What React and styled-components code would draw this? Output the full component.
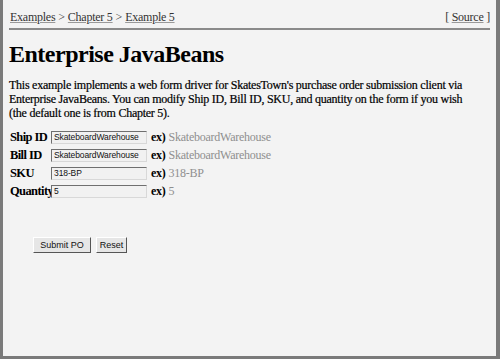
import React from "react";
import styled, { createGlobalStyle } from "styled-components";

const Global = createGlobalStyle`
  html, body { margin: 0; padding: 0; background: #f3f3f3; }
`;

const serif = `"Liberation Serif", "Times New Roman", Times, serif`;
const sans = `"Liberation Sans", Arial, sans-serif`;

const Frame = styled.div`
  box-sizing: border-box;
  width: 500px;
  height: 359px;
  background: #f3f3f3;
  border-left: 3px solid #7a7a7a;
  border-right: 4px solid #7a7a7a;
  border-bottom: 3px solid #7a7a7a;
  padding: 0 6px 0 6px;
  overflow: hidden;
  font-family: ${serif};
  font-size: 12px;
  letter-spacing: -0.25px;
  color: #000;
`;

const TopBar = styled.div`
  display: flex;
  justify-content: space-between;
  align-items: baseline;
  line-height: 14px;
  padding: 10px 0 4px 1px;
  border-bottom: 2px solid #8a8a8a;
  color: #333;
`;

const Crumbs = styled.div`
  display: flex;
  gap: 3px;
`;

const Link = styled.a`
  color: #333;
  text-decoration: underline;
  text-decoration-color: #999;
`;

const Title = styled.h1`
  font-family: ${serif};
  font-size: 24px;
  line-height: 27px;
  letter-spacing: -0.5px;
  font-weight: bold;
  margin: 11px 0 10px 0;
  color: #000;
`;

const Intro = styled.p`
  line-height: 14px;
  margin: 0 0 8px 0;
  color: #000;
  white-space: nowrap;
  -webkit-text-stroke: 0.2px #000;
`;

const Form = styled.form`
  display: grid;
  grid-template-columns: 41px auto auto 1fr;
  grid-auto-rows: 18px;
  column-gap: 4px;
  align-items: center;
  padding-left: 1px;
`;

const Label = styled.span`
  font-size: 12.5px;
  font-weight: bold;
  letter-spacing: -0.6px;
  white-space: nowrap;
`;

const Field = styled.input`
  box-sizing: border-box;
  width: 96px;
  height: 13px;
  margin-left: -4px;
  padding: 0 2px;
  font-family: ${sans};
  font-size: 8.5px;
  letter-spacing: -0.1px;
  background: #f1f1f1;
  border: 1px solid #6f6f6f;
  border-right-color: #d8d8d8;
  border-bottom-color: #d8d8d8;
  color: #111;
`;

const Ex = styled.span`
  font-weight: bold;
`;

const Sample = styled.span`
  color: #8f8f8f;
  margin-left: -1px;
`;

const Buttons = styled.div`
  display: flex;
  gap: 5px;
  padding: 37px 0 0 24px;
`;

const Button = styled.button`
  box-sizing: border-box;
  font-family: ${sans};
  font-size: 9px;
  letter-spacing: 0;
  height: 16px;
  width: ${p => p.$w}px;
  padding: 0;
  background: #e6e6e6;
  color: #111;
  border: 1px solid #fff;
  border-right-color: #555;
  border-bottom-color: #555;
`;

const rows = [
  { label: "Ship ID", value: "SkateboardWarehouse" },
  { label: "Bill ID", value: "SkateboardWarehouse" },
  { label: "SKU", value: "318-BP" },
  { label: "Quantity", value: "5" },
];

export default function App() {
  return (
    <>
      <Global />
      <Frame>
        <TopBar>
          <Crumbs>
            <Link>Examples</Link> &gt; <Link>Chapter 5</Link> &gt; <Link>Example 5</Link>
          </Crumbs>
          <span>[ <Link>Source</Link> ]</span>
        </TopBar>
        <Title>Enterprise JavaBeans</Title>
        <Intro>
          This example implements a web form driver for SkatesTown's purchase order submission client via
          <br />
          Enterprise JavaBeans. You can modify Ship ID, Bill ID, SKU, and quantity on the form if you wish
          <br />
          (the default one is from Chapter 5).
        </Intro>
        <Form>
          {rows.map(r => (
            <React.Fragment key={r.label}>
              <Label>{r.label}</Label>
              <Field defaultValue={r.value} />
              <Ex>ex)</Ex>
              <Sample>{r.value}</Sample>
            </React.Fragment>
          ))}
        </Form>
        <Buttons>
          <Button type="button" $w={58}>Submit PO</Button>
          <Button type="button" $w={31}>Reset</Button>
        </Buttons>
      </Frame>
    </>
  );
}
